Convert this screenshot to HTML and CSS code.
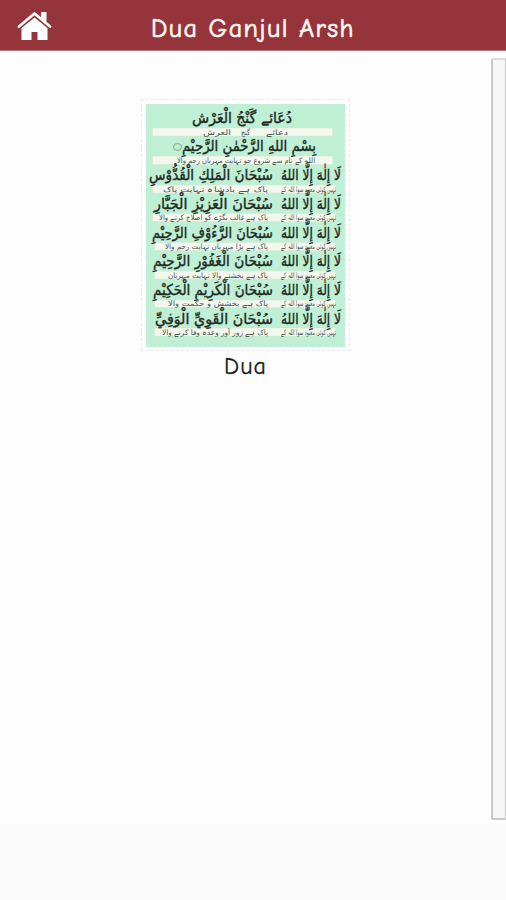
FILE: index.html
```
<!DOCTYPE html>
<html lang="en">
<head>
<meta charset="utf-8">
<title>Dua Ganjul Arsh</title>
<link rel="stylesheet" href="styles.css">
</head>
<body>
<header class="bar">
  <svg class="home" viewBox="0 0 36 30" role="img" aria-label="Home">
    <path class="house" d="M24 1h5.500v10l-5.500-4zM4.500 17 17.500 6.500 30.500 17v12H20.500v-8h-6v8h-10z"/>
    <path class="gap" d="M2 18 17.500 5 33 18"/>
    <path class="roof" d="M2 15.500 17.500 2.500 33 15.500"/>
  </svg>
  <h1 class="title">Dua Ganjul Arsh</h1>
</header>
<main class="content">
  <section class="list">
    <figure class="item">
      <div class="frame">
        <svg class="page" viewBox="146 104 199 243" direction="rtl">
          <rect class="paper" x="146" y="104" width="199" height="243"/>
          <g class="strips">
            <rect x="152.500" y="128" width="180" height="8"/>
            <rect x="152.500" y="156" width="180" height="8.500"/>
            <rect x="152.500" y="185" width="183" height="8"/>
            <rect x="152.500" y="213.500" width="183" height="8"/>
            <rect x="154.500" y="242.500" width="181" height="8"/>
            <rect x="154.500" y="271" width="181" height="8"/>
            <rect x="154.500" y="300" width="181" height="7.500"/>
            <rect x="154.500" y="328" width="181" height="8"/>
          </g>
          <g class="arabic" lang="ar">
            <text x="292" y="123" textLength="100" lengthAdjust="spacingAndGlyphs">دُعَائے گَنْجُ الْعَرْش</text>
            <text x="316" y="151" textLength="134" lengthAdjust="spacingAndGlyphs">بِسْمِ اللهِ الرَّحْمٰنِ الرَّحِيْمِ</text>
            <text x="341" y="180" textLength="60" lengthAdjust="spacingAndGlyphs">لَا إِلٰهَ إِلَّا اللهُ</text>
            <text x="273" y="180" textLength="124" lengthAdjust="spacingAndGlyphs">سُبْحَانَ الْمَلِكِ الْقُدُّوْسِ</text>
            <text x="341" y="208.500" textLength="60" lengthAdjust="spacingAndGlyphs">لَا إِلٰهَ إِلَّا اللهُ</text>
            <text x="273" y="208.500" textLength="119" lengthAdjust="spacingAndGlyphs">سُبْحَانَ الْعَزِيْزِ الْجَبَّارِ</text>
            <text x="341" y="237.500" textLength="60" lengthAdjust="spacingAndGlyphs">لَا إِلٰهَ إِلَّا اللهُ</text>
            <text x="273" y="237.500" textLength="121" lengthAdjust="spacingAndGlyphs">سُبْحَانَ الرَّءُوْفِ الرَّحِيْمِ</text>
            <text x="341" y="266" textLength="60" lengthAdjust="spacingAndGlyphs">لَا إِلٰهَ إِلَّا اللهُ</text>
            <text x="273" y="266" textLength="120" lengthAdjust="spacingAndGlyphs">سُبْحَانَ الْغَفُوْرِ الرَّحِيْمِ</text>
            <text x="341" y="295" textLength="60" lengthAdjust="spacingAndGlyphs">لَا إِلٰهَ إِلَّا اللهُ</text>
            <text x="273" y="295" textLength="120" lengthAdjust="spacingAndGlyphs">سُبْحَانَ الْكَرِيْمِ الْحَكِيْمِ</text>
            <text x="341" y="323.500" textLength="60" lengthAdjust="spacingAndGlyphs">لَا إِلٰهَ إِلَّا اللهُ</text>
            <text x="273" y="323.500" textLength="118" lengthAdjust="spacingAndGlyphs">سُبْحَانَ الْقَوِيِّ الْوَفِيِّ</text>
          </g>
          <ellipse class="mark" cx="177.500" cy="147" rx="4" ry="3.500"/>
          <g class="urdu" lang="ur">
            <text x="288" y="134.500" textLength="22" lengthAdjust="spacingAndGlyphs">دعائے</text>
            <text x="250" y="134.500" textLength="9" lengthAdjust="spacingAndGlyphs">گنج</text>
            <text x="231" y="134.500" textLength="28" lengthAdjust="spacingAndGlyphs">العرش</text>
            <text x="315" y="162.500" textLength="138" lengthAdjust="spacingAndGlyphs">اللہ کے نام سے شروع جو نہایت مہربان رحم والا</text>
            <text x="336" y="191.500" textLength="55" lengthAdjust="spacingAndGlyphs">نہیں کوئی معبود سوا اللہ کے</text>
            <text x="268" y="191.500" textLength="105" lengthAdjust="spacingAndGlyphs">پاک ہے بادشاہ نہایت پاک</text>
            <text x="336" y="220" textLength="55" lengthAdjust="spacingAndGlyphs">نہیں کوئی معبود سوا اللہ کے</text>
            <text x="268" y="220" textLength="109" lengthAdjust="spacingAndGlyphs">پاک ہے غالب بگڑے کو اصلاح کرنے والا</text>
            <text x="336" y="249" textLength="55" lengthAdjust="spacingAndGlyphs">نہیں کوئی معبود سوا اللہ کے</text>
            <text x="268" y="249" textLength="103" lengthAdjust="spacingAndGlyphs">پاک ہے بڑا مہربان نہایت رحم والا</text>
            <text x="336" y="277.500" textLength="55" lengthAdjust="spacingAndGlyphs">نہیں کوئی معبود سوا اللہ کے</text>
            <text x="268" y="277.500" textLength="100" lengthAdjust="spacingAndGlyphs">پاک ہے بخشنے والا نہایت مہربان</text>
            <text x="336" y="306" textLength="55" lengthAdjust="spacingAndGlyphs">نہیں کوئی معبود سوا اللہ کے</text>
            <text x="268" y="306" textLength="100" lengthAdjust="spacingAndGlyphs">پاک ہے بخشش و حکمت والا</text>
            <text x="336" y="334.500" textLength="55" lengthAdjust="spacingAndGlyphs">نہیں کوئی معبود سوا اللہ کے</text>
            <text x="268" y="334.500" textLength="106" lengthAdjust="spacingAndGlyphs">پاک ہے زور آور وعدہ وفا کرنے والا</text>
          </g>
        </svg>
      </div>
      <figcaption class="caption">Dua</figcaption>
    </figure>
  </section>
  <div class="scroll"></div>
</main>
<footer class="foot"></footer>
</body>
</html>
```
FILE: styles.css
```
* { box-sizing: border-box; }
body {
  margin: 0;
  height: 900px;
  display: flex;
  flex-direction: column;
  overflow: hidden;
  background: #fdfdfd;
  font-family: "Comic Sans MS", "Comic Neue", Lato, sans-serif;
}
.bar {
  height: 51px;
  flex: none;
  display: grid;
  grid-template-columns: 54px 1fr 54px;
  background: #95353b;
  border-bottom: 1px solid #b8777c;
}
.home { width: 36px; height: 30px; margin: 11px 0 0 17px; }
.roof { fill: none; stroke: #fff; stroke-width: 2.8; stroke-linecap: round; }
.gap { fill: none; stroke: #95353b; stroke-width: 1.2; }
.house { fill: #fff; }
.title {
  margin: 4px 0 0;
  color: #fff5f3;
  font-size: 26px;
  line-height: 50px;
  font-weight: 400;
  letter-spacing: 1.45px;
  text-align: center;
  white-space: nowrap;
  -webkit-text-stroke: .7px #fff5f3;
}
.content { height: 773px; flex: none; display: flex; }
.list { flex: 1; }
.item {
  margin: 48px 0 0 141px;
  width: 209px;
  display: flex;
  flex-direction: column;
  align-items: center;
}
.frame {
  width: 209px;
  height: 252px;
  padding: 4px;
  border: 1px dashed #e9e9e9;
  background: #fff;
}
.page { display: block; width: 199px; height: 243px; overflow: visible; }
.paper { fill: #bfefd5; }
.strips { fill: #f3f7ed; stroke: #d5e5d4; stroke-width: .5; }
.arabic { font: 15px "DejaVu Sans", sans-serif; fill: #1d2922; stroke: #1d2922; stroke-width: .4; }
.urdu { font: 7.5px "DejaVu Sans", sans-serif; fill: #4a554f; }
.mark { fill: none; stroke: #83a893; stroke-width: 1; }
.caption {
  margin-top: 0;
  color: #1c1c1c;
  font-size: 24px;
  line-height: 30px;
  letter-spacing: 1.1px;
  -webkit-text-stroke: .3px #1c1c1c;
}
.scroll {
  width: 15px;
  height: 762px;
  margin-top: 7px;
  flex: none;
  background: #f6f6f6;
  border: 2px solid #cacaca;
  border-top-color: #dedede;
  border-right-width: 1px;
  border-radius: 2px 0 0 2px;
}
.foot { flex: 1; background: #fafafa; }
```
